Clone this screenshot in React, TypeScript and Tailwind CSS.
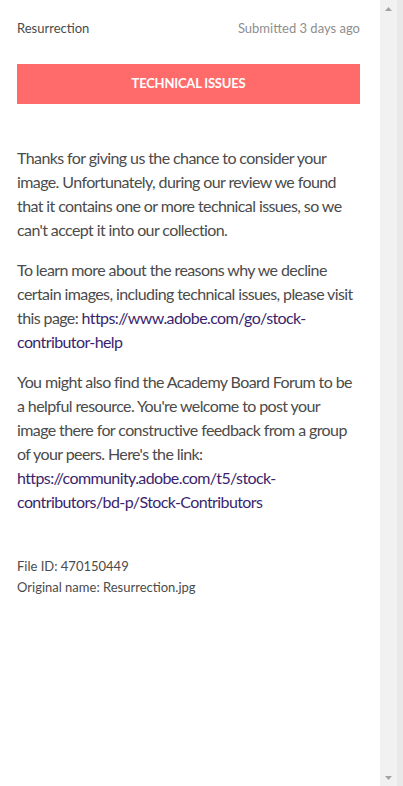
import React from 'react';

const font = { fontFamily: 'Lato, "Liberation Sans", sans-serif' };

const ScrollArrow = ({ up }: { up?: boolean }) => (
  <div className="flex h-[17px] items-center justify-center">
    <svg width="7" height="4" viewBox="0 0 7 4">
      <path d={up ? 'M0 4 L3.5 0 L7 4 Z' : 'M0 0 L3.5 4 L7 0 Z'} fill="#a3a3a3" />
    </svg>
  </div>
);

export default function App() {
  return (
    <div className="flex h-[786px] w-[403px] bg-white" style={font}>
      <main className="flex w-[380px] flex-col pl-[17px] pr-[20px] pt-[19px] text-[#4b4b4b]">
        {/* Шапка: имя файла + дата */}
        <div className="flex items-center justify-between text-[13px] leading-[18px]">
          <span>Resurrection</span>
          <span className="text-[#8e8e8e]">Submitted 3 days ago</span>
        </div>

        {/* Статус */}
        <div className="mt-[27px] flex h-[40px] items-center justify-center bg-[#ff6b6b] text-[13px] font-bold tracking-[-0.2px] text-white">
          TECHNICAL ISSUES
        </div>

        {/* Текст письма */}
        <div className="mt-[42px] space-y-[16px] text-[16px] leading-[24px] tracking-[-0.6px]">
          <p>
            Thanks for giving us the chance to consider your image. Unfortunately, during our
            review we found that it contains one or more technical issues, so we can't accept it
            into our collection.
          </p>
          <p>
            To learn more about the reasons why we decline certain images, including technical
            issues, please visit this page:{' '}
            <a className="text-[#3b1f6e]" href="#">
              https://www.adobe.com/go/stock-contributor-help
            </a>
          </p>
          <p>
            You might also find the Academy Board Forum to be a helpful resource. You're welcome
            to post your image there for constructive feedback from a group of your peers. Here's
            the link:{' '}
            <a className="text-[#3b1f6e]" href="#">
              https://community.adobe.com/t5/stock-contributors/bd-p/Stock-Contributors
            </a>
          </p>
        </div>

        {/* Метаданные файла */}
        <div className="mt-[42px] text-[13px] leading-[21px]">
          <p>File ID: 470150449</p>
          <p>Original name: Resurrection.jpg</p>
        </div>
      </main>

      {/* Полоса прокрутки */}
      <div className="flex w-[17px] flex-col justify-between bg-[#f1f1f1]">
        <ScrollArrow up />
        <ScrollArrow />
      </div>
      <div className="w-[6px] bg-[#e9e9e9]" />
    </div>
  );
}
